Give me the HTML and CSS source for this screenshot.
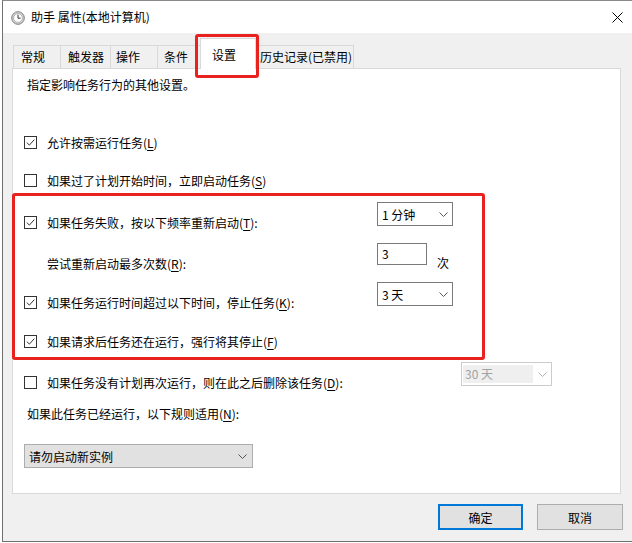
FILE: index.html
```html
<!DOCTYPE html>
<html lang="zh-CN">
    <head>
        <meta charset="utf-8" />
        <title>助手 属性(本地计算机)</title>
        <link rel="stylesheet" href="styles.css">
    </head>
    <body>
        <div class="window">
            <!-- title bar -->
            <div class="titlebar">
                <svg class="app-icon" width="14" height="14" viewBox="0 0 14 14">
                    <circle cx="7" cy="7" r="6.3" fill="#d6d6d6" stroke="#7c7c7c" stroke-width="1"/>
                    <circle cx="7" cy="7" r="4.4" fill="#ffffff" stroke="#a8a8a8" stroke-width="0.8"/>
                    <path d="M7 3.6 V7.2 H9.6" fill="none" stroke="#333333" stroke-width="1"/>
                </svg>
                <span class="title">助手 属性(本地计算机)</span>
                <svg class="close" width="11" height="11" viewBox="0 0 11 11">
                    <path d="M0.5 0.5 L10.5 10.5 M10.5 0.5 L0.5 10.5" stroke="#000000" stroke-width="1"/>
                </svg>
            </div>

            <div class="client">
                <!-- tab strip -->
                <div class="tabs">
                    <div class="tab tab-general">常规</div>
                    <div class="tab tab-triggers">触发器</div>
                    <div class="tab tab-actions">操作</div>
                    <div class="tab tab-conditions">条件</div>
                    <div class="tab tab-settings active">设置</div>
                    <div class="tab tab-history">历史记录(已禁用)</div>
                </div>

                <!-- settings page -->
                <div class="panel">
                    <div class="intro">指定影响任务行为的其他设置。</div>

                    <div class="line r-ondemand">
                        <span class="check"><svg width="11" height="11" viewBox="0 0 11 11"><path d="M1.8 5.6 L4.4 8.1 L9.3 2.6" fill="none" stroke="#333" stroke-width="1"/></svg></span>
                        允许按需运行任务(<u>L</u>)
                    </div>

                    <div class="line r-missed">
                        <span class="check"></span>
                        如果过了计划开始时间，立即启动任务(<u>S</u>)
                    </div>

                    <div class="row r-restart">
                        <div class="line">
                            <span class="check"><svg width="11" height="11" viewBox="0 0 11 11"><path d="M1.8 5.6 L4.4 8.1 L9.3 2.6" fill="none" stroke="#333" stroke-width="1"/></svg></span>
                            如果任务失败，按以下频率重新启动(<u>T</u>):
                        </div>
                        <div class="select">
                            <span>1 分钟</span>
                            <svg class="chev" width="9" height="5" viewBox="0 0 9 5"><path d="M0.5 0.5 L4.5 4.5 L8.5 0.5" fill="none" stroke="#555" stroke-width="1"/></svg>
                        </div>
                    </div>

                    <div class="row r-retry">
                        <div class="line indent">尝试重新启动最多次数(<u>R</u>):</div>
                        <div class="spin">3</div>
                        <span class="unit">次</span>
                    </div>

                    <div class="row r-stop">
                        <div class="line">
                            <span class="check"><svg width="11" height="11" viewBox="0 0 11 11"><path d="M1.8 5.6 L4.4 8.1 L9.3 2.6" fill="none" stroke="#333" stroke-width="1"/></svg></span>
                            如果任务运行时间超过以下时间，停止任务(<u>K</u>):
                        </div>
                        <div class="select">
                            <span>3 天</span>
                            <svg class="chev" width="9" height="5" viewBox="0 0 9 5"><path d="M0.5 0.5 L4.5 4.5 L8.5 0.5" fill="none" stroke="#555" stroke-width="1"/></svg>
                        </div>
                    </div>

                    <div class="line r-force">
                        <span class="check"><svg width="11" height="11" viewBox="0 0 11 11"><path d="M1.8 5.6 L4.4 8.1 L9.3 2.6" fill="none" stroke="#333" stroke-width="1"/></svg></span>
                        如果请求后任务还在运行，强行将其停止(<u>F</u>)
                    </div>

                    <div class="row r-delete">
                        <div class="line wide">
                            <span class="check"></span>
                            如果任务没有计划再次运行，则在此之后删除该任务(<u>D</u>):
                        </div>
                        <div class="select disabled">
                            <span class="value">30 天</span>
                            <svg class="chev" width="9" height="5" viewBox="0 0 9 5"><path d="M0.5 0.5 L4.5 4.5 L8.5 0.5" fill="none" stroke="#b5b5b5" stroke-width="1"/></svg>
                        </div>
                    </div>

                    <div class="intro r-rule">如果此任务已经运行，以下规则适用(<u>N</u>):</div>

                    <div class="select combo">
                        <span>请勿启动新实例</span>
                        <svg class="chev" width="9" height="5" viewBox="0 0 9 5"><path d="M0.5 0.5 L4.5 4.5 L8.5 0.5" fill="none" stroke="#555" stroke-width="1"/></svg>
                    </div>
                </div>

                <!-- dialog buttons -->
                <div class="buttons">
                    <a class="btn default">确定</a>
                    <a class="btn">取消</a>
                </div>
            </div>

            <!-- red annotation frames -->
            <div class="mark mark-tab"></div>
            <div class="mark mark-group"></div>
        </div>
    </body>
</html>
```

FILE: styles.css
```css
/* body props */
body {
    margin:             0;
    background-color:   #FFFFFF;
    font-family:        "Noto Sans CJK SC", "Microsoft YaHei", sans-serif;
    font-size:          12px;
    color:              #000000;
    overflow:           hidden;
}
u {
    text-decoration-thickness: 1px;
    text-underline-offset:     2px;
}

/* dialog frame */
.window {
    position:           relative;
    margin-left:        2px;
    width:              630px;
    height:             540px;
    border-top:         1px solid #8a8a8a;
    border-left:        1px solid #707070;
    border-bottom:      1px solid #707070;
    background-color:   #F0F0F0;
}
.titlebar {
    display:            flex;
    align-items:        center;
    height:             32px;
    padding-left:       8px;
    background-color:   #FFFFFF;
}
.app-icon {
    margin-right:       6px;
    margin-top:         1px;
}
.title {
    line-height:        20px;
}
.close {
    margin-left:        auto;
    margin-right:       10px;
}

/* tabs */
.tabs {
    display:            flex;
    align-items:        flex-end;
    height:             30px;
    margin:             5px 0 0 10px;
}
.tab {
    box-sizing:         border-box;
    height:             23px;
    line-height:        22px;
    padding-left:       6px;
    white-space:        nowrap;
    border:             1px solid #D9D9D9;
    border-right:       none;
    border-bottom:      none;
    background-color:   #F0F0F0;
}
.tab-general    { width: 47px; padding-left: 7px; }
.tab-triggers   { width: 50px; padding-left: 7px; }
.tab-actions    { width: 47px; padding-left: 5px; }
.tab-conditions { width: 45px; }
.tab-history {
    width:              100px;
    padding-left:       5px;
    border-right:       1px solid #D9D9D9;
}
.tab.active {
    position:           relative;
    z-index:            1;
    width:              56px;
    height:             31px;
    margin:             0 -2px -1px -2px;
    padding:            6px 0 0 11px;
    line-height:        20px;
    border-right:       1px solid #D9D9D9;
    background-color:   #FFFFFF;
}

/* settings page */
.panel {
    box-sizing:         border-box;
    width:              609px;
    height:             426px;
    margin-left:        9px;
    padding-left:       11px;
    border:             1px solid #D9D9D9;
    background-color:   #FFFFFF;
}
.intro {
    margin-top:         6px;
    padding-left:       3px;
    line-height:        20px;
}
.line {
    display:            flex;
    align-items:        center;
    height:             20px;
    white-space:        nowrap;
}
.check {
    box-sizing:         border-box;
    display:            flex;
    align-items:        center;
    justify-content:    center;
    width:              13px;
    height:             13px;
    margin-right:       10px;
    border:             1px solid #333333;
    background-color:   #FFFFFF;
}
.row {
    display:            flex;
    align-items:        flex-start;
    height:             30px;
}
.row .line {
    width:              353px;
    margin-top:         10px;
}
.row .line.wide {
    width:              437px;
}
.line.indent {
    padding-left:       23px;
    box-sizing:         border-box;
}

/* row spacing */
.r-ondemand { margin-top: 37px; }
.r-missed   { margin-top: 18px; }
.r-restart  { margin-top: 12px; }
.r-retry    { margin-top: 11px; }
.r-stop     { margin-top: 9px; }
.r-force    { margin-top: 19px; }
.r-delete   { margin-top: 11px; }
.r-rule     { margin-top: 12px; }

/* inputs */
.select {
    box-sizing:         border-box;
    display:            flex;
    align-items:        center;
    width:              76px;
    height:             24px;
    padding:            0 4px 0 4px;
    border:             1px solid #7A7A7A;
    background-color:   #FFFFFF;
}
.select .chev {
    margin-left:        auto;
}
.select.disabled {
    width:              91px;
    padding:            0 4px 0 1px;
    border-color:       #CCCCCC;
    color:              #A2A2A2;
}
.select.disabled .value {
    width:              70px;
    height:             18px;
    line-height:        18px;
    padding-left:       2px;
    box-sizing:         border-box;
    background-color:   #EFEFEF;
}
.select.combo {
    width:              229px;
    margin-top:         20px;
    border-color:       #ADADAD;
    background-color:   #E1E1E1;
    padding-right:      5px;
}
.spin {
    box-sizing:         border-box;
    width:              50px;
    height:             22px;
    line-height:        20px;
    padding-left:       4px;
    border:             1px solid #7A7A7A;
}
.unit {
    margin:             10px 0 0 10px;
    line-height:        20px;
}

/* dialog buttons */
.buttons {
    display:            flex;
    justify-content:    flex-end;
    gap:                14px;
    margin-top:         10px;
    padding-right:      10px;
}
a.btn {
    box-sizing:         border-box;
    display:            flex;
    align-items:        center;
    justify-content:    center;
    width:              86px;
    height:             26px;
    border:             1px solid #ADADAD;
    background-color:   #E1E1E1;
    text-decoration:    none;
    color:              #000000;
}
a.btn.default {
    width:              85px;
    border:             2px solid #0078D7;
}

/* red annotation frames */
.mark {
    position:           absolute;
    box-sizing:         border-box;
    border:             3px solid #E8221E;
    border-radius:      3px;
    z-index:            2;
}
.mark-tab {
    left:               192px;
    top:                33px;
    width:              64px;
    height:             44px;
}
.mark-group {
    left:               9px;
    top:                192px;
    width:              473px;
    height:             167px;
}
```
